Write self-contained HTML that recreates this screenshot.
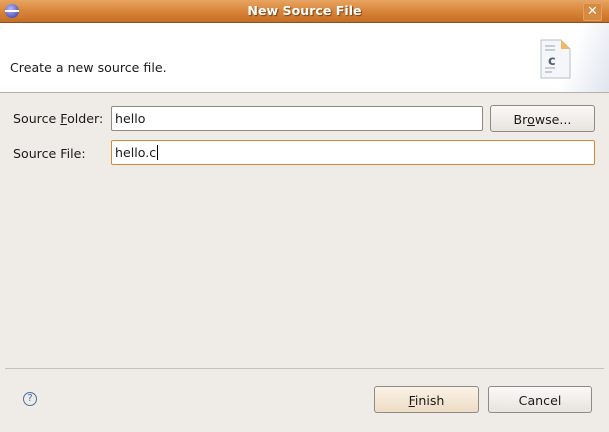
<!DOCTYPE html><html><head><style>
body{margin:0;width:609px;height:432px;background:#efebe7;font-family:"DejaVu Sans","Liberation Sans",sans-serif;font-size:12.6px;color:#1a1a1a;position:relative;overflow:hidden}
.a{position:absolute}
.title{left:0;top:0;width:609px;height:22px;background:linear-gradient(#e8a461,#d9853a 50%,#c56f25);border-bottom:1px solid #8a5020}
.inp{background:#fff;border:1px solid #8f8a84;border-radius:2px;box-sizing:border-box;padding-left:3px;line-height:24px}
.btn{border:1px solid #8e8a85;border-radius:3px;box-sizing:border-box;background:linear-gradient(#faf9f7,#e8e4df);text-align:center;line-height:27px}
</style></head><body>
<div class="a title"></div>
<div class="a" style="left:5px;top:4px;width:14px;height:14px;border-radius:50%;background:radial-gradient(circle at 40% 35%,#b8b8ff,#3030a0);"></div>
<div class="a" style="left:5px;top:10px;width:14px;height:2px;background:#fff"></div>
<div class="a" style="left:0;top:3px;width:609px;text-align:center;color:#fff;font-weight:bold;font-size:12.6px;text-shadow:1px 1px 1px #7a4010">New Source File</div>
<div class="a" style="left:583px;top:3px;width:17px;height:16px;border:1px solid #fff3;border-radius:2px;background:#d7893f;color:#fff;font-weight:bold;text-align:center;line-height:16px;font-size:13px">✕</div>
<div class="a" style="left:0;top:23px;width:609px;height:69px;background:#fff"></div>
<div class="a" style="left:560px;top:23px;width:49px;height:69px;background:linear-gradient(110deg,#fff 30%,#dfe5ee)"></div>
<div class="a" style="left:0;top:92px;width:609px;height:1px;background:#b5b0aa"></div>
<div class="a" style="left:10px;top:60px">Create a new source file.</div>
<svg class="a" style="left:538px;top:38px" width="36" height="42"><path d="M3 2h20l9 9v29H3z" fill="#f4f6fa" stroke="#b8bfca"/><path d="M23 2v9h9z" fill="#f2b860"/><path d="M7 8h10M7 12h10M7 30h10M7 34h7" stroke="#9aa3b0"/><text x="10" y="27" font-family="DejaVu Sans" font-weight="bold" font-size="13" fill="#556070">c</text></svg>
<div class="a" style="left:13px;top:111px">Source <u>F</u>older:</div>
<div class="a inp" style="left:111px;top:106px;width:372px;height:25px">hello</div>
<div class="a btn" style="left:490px;top:105px;width:105px;height:27px">Br<u>o</u>wse...</div>
<div class="a" style="left:13px;top:146px">Source File:</div>
<div class="a inp" style="left:111px;top:140px;width:484px;height:25px;border:1px solid #d08a3a">hello.c<span style="border-left:1px solid #000;margin-left:1px"></span></div>
<div class="a" style="left:5px;top:368px;width:599px;height:1px;background:#c5c0ba"></div>
<div class="a" style="left:23px;top:392px;width:12px;height:12px;border:1px solid #4a6fa5;border-radius:50%;font-size:10px;text-align:center;line-height:12px;color:#4a6fa5">?</div>
<div class="a btn" style="left:374px;top:386px;width:105px;height:27px;background:linear-gradient(#fbf2e6,#eddcc5)"><u>F</u>inish</div>
<div class="a btn" style="left:488px;top:386px;width:104px;height:27px">Cancel</div>
</body></html>
